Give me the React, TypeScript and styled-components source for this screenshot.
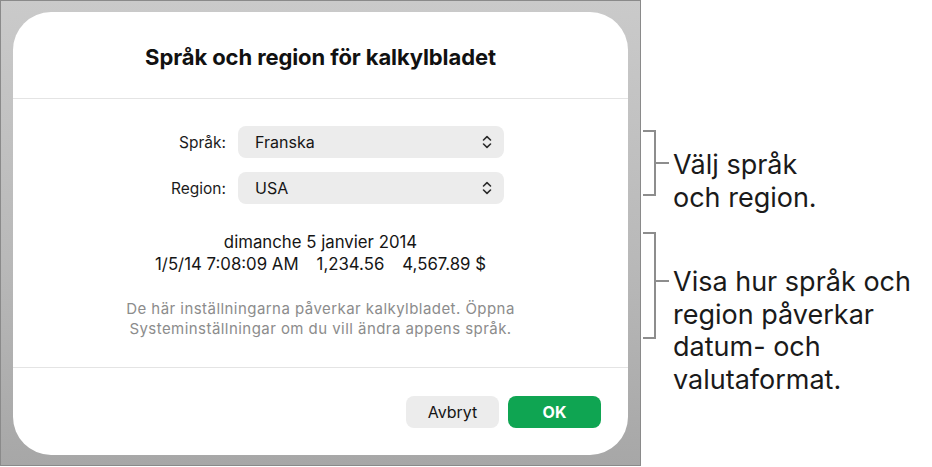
import React from "react";
import styled, { createGlobalStyle } from "styled-components";

const Global = createGlobalStyle`
  html, body { margin: 0; padding: 0; background: #ffffff; }
  body { font-family: Inter, "Noto Sans", "Liberation Sans", sans-serif; -webkit-font-smoothing: antialiased; }
`;

const Page = styled.div`
  display: flex;
  align-items: flex-start;
  width: 932px;
  height: 467px;
  overflow: hidden;
`;

const Frame = styled.div`
  box-sizing: border-box;
  width: 641px;
  height: 466px;
  border: 1px solid #8a8a8a;
  background: linear-gradient(180deg, #cacaca 0%, #b9b9b9 55%, #a7a7a7 100%);
  padding: 11px 12px 9px 12px;
  flex-shrink: 0;
`;

const Dialog = styled.div`
  box-sizing: border-box;
  width: 615px;
  height: 443px;
  background: #ffffff;
  border-radius: 38px;
  display: flex;
  flex-direction: column;
  overflow: hidden;
`;

const Header = styled.div`
  height: 87px;
  display: flex;
  align-items: center;
  justify-content: center;
  border-bottom: 1px solid #e4e4e4;
  box-sizing: border-box;
`;

const Title = styled.h1`
  margin: 0;
  padding-top: 3px;
  font-size: 22px;
  font-weight: 700;
  letter-spacing: -0.1px;
  color: #111;
`;

const Body = styled.div`
  height: 269px;
  box-sizing: border-box;
  border-bottom: 1px solid #e4e4e4;
  padding-top: 27px;
  display: flex;
  flex-direction: column;
`;

const Form = styled.div`
  display: grid;
  grid-template-columns: 213px 266px;
  column-gap: 12px;
  row-gap: 14px;
  align-items: center;
`;

const Label = styled.label`
  text-align: right;
  font-size: 15.5px;
  color: #1c1c1c;
`;

const Select = styled.div`
  box-sizing: border-box;
  height: 32px;
  border-radius: 8px;
  background: #ececec;
  display: flex;
  align-items: center;
  justify-content: space-between;
  padding: 0 12px 0 17px;
  font-size: 16px;
  color: #151515;
`;

const Preview = styled.div`
  margin-top: 27px;
  display: flex;
  flex-direction: column;
  align-items: center;
  font-size: 16.8px;
  line-height: 22px;
  color: #151515;
`;

const PreviewLine = styled.div`
  display: flex;
  gap: 18px;
`;

const Note = styled.p`
  margin: 24px 0 0;
  text-align: center;
  font-size: 15px;
  letter-spacing: 0.45px;
  line-height: 20px;
  color: #8c8c8c;
`;

const Footer = styled.div`
  flex: 1;
  display: flex;
  justify-content: flex-end;
  align-items: flex-start;
  gap: 9px;
  padding: 28px 27px 0 0;
`;

const Button = styled.button<{ $primary?: boolean }>`
  width: 93px;
  height: 32px;
  border: none;
  border-radius: 8px;
  font-family: inherit;
  font-size: 16px;
  font-weight: ${(p) => (p.$primary ? 700 : 400)};
  background: ${(p) => (p.$primary ? "#0fa552" : "#ececec")};
  color: ${(p) => (p.$primary ? "#ffffff" : "#151515")};
`;

const Annotations = styled.div`
  display: flex;
  flex-direction: column;
  margin-left: 2px;
  padding-top: 130px;
`;

const AnnoItem = styled.div<{ $gapTop?: number }>`
  display: flex;
  align-items: flex-start;
  gap: 4px;
  margin-top: ${(p) => p.$gapTop ?? 0}px;
`;

const AnnoText = styled.div<{ $offset: number }>`
  margin-top: ${(p) => p.$offset}px;
  font-size: 27px;
  line-height: 32.5px;
  color: #1a1a1a;
`;

const Chevron = () => (
  <svg width="10" height="14" viewBox="0 0 10 14" fill="none">
    <path d="M1.5 5 L5 1.6 L8.5 5" stroke="#2a2a2a" strokeWidth="1.6" strokeLinecap="round" strokeLinejoin="round" />
    <path d="M1.5 9 L5 12.4 L8.5 9" stroke="#2a2a2a" strokeWidth="1.6" strokeLinecap="round" strokeLinejoin="round" />
  </svg>
);

const Bracket = ({ h, tick }: { h: number; tick: number }) => (
  <svg width="26" height={h} viewBox={`0 0 26 ${h}`} fill="none">
    <path d={`M0 1 H12 V${h - 1} H0`} stroke="#8d8d8d" strokeWidth="2" />
    <path d={`M12 ${tick} H26`} stroke="#8d8d8d" strokeWidth="2" />
  </svg>
);

export default function App() {
  return (
    <Page>
      <Global />
      <Frame>
        <Dialog>
          <Header>
            <Title>Språk och region för kalkylbladet</Title>
          </Header>
          <Body>
            <Form>
              <Label>Språk:</Label>
              <Select>
                <span>Franska</span>
                <Chevron />
              </Select>
              <Label>Region:</Label>
              <Select>
                <span>USA</span>
                <Chevron />
              </Select>
            </Form>
            <Preview>
              <div>dimanche 5 janvier 2014</div>
              <PreviewLine>
                <span>1/5/14 7:08:09 AM</span>
                <span>1,234.56</span>
                <span>4,567.89 $</span>
              </PreviewLine>
            </Preview>
            <Note>
              De här inställningarna påverkar kalkylbladet. Öppna
              <br />
              Systeminställningar om du vill ändra appens språk.
            </Note>
          </Body>
          <Footer>
            <Button>Avbryt</Button>
            <Button $primary>OK</Button>
          </Footer>
        </Dialog>
      </Frame>
      <Annotations>
        <AnnoItem>
          <Bracket h={66} tick={33} />
          <AnnoText $offset={19}>
            Välj språk
            <br />
            och region.
          </AnnoText>
        </AnnoItem>
        <AnnoItem $gapTop={18}>
          <Bracket h={107} tick={49} />
          <AnnoText $offset={34}>
            Visa hur språk och
            <br />
            region påverkar
            <br />
            datum- och
            <br />
            valutaformat.
          </AnnoText>
        </AnnoItem>
      </Annotations>
    </Page>
  );
}
